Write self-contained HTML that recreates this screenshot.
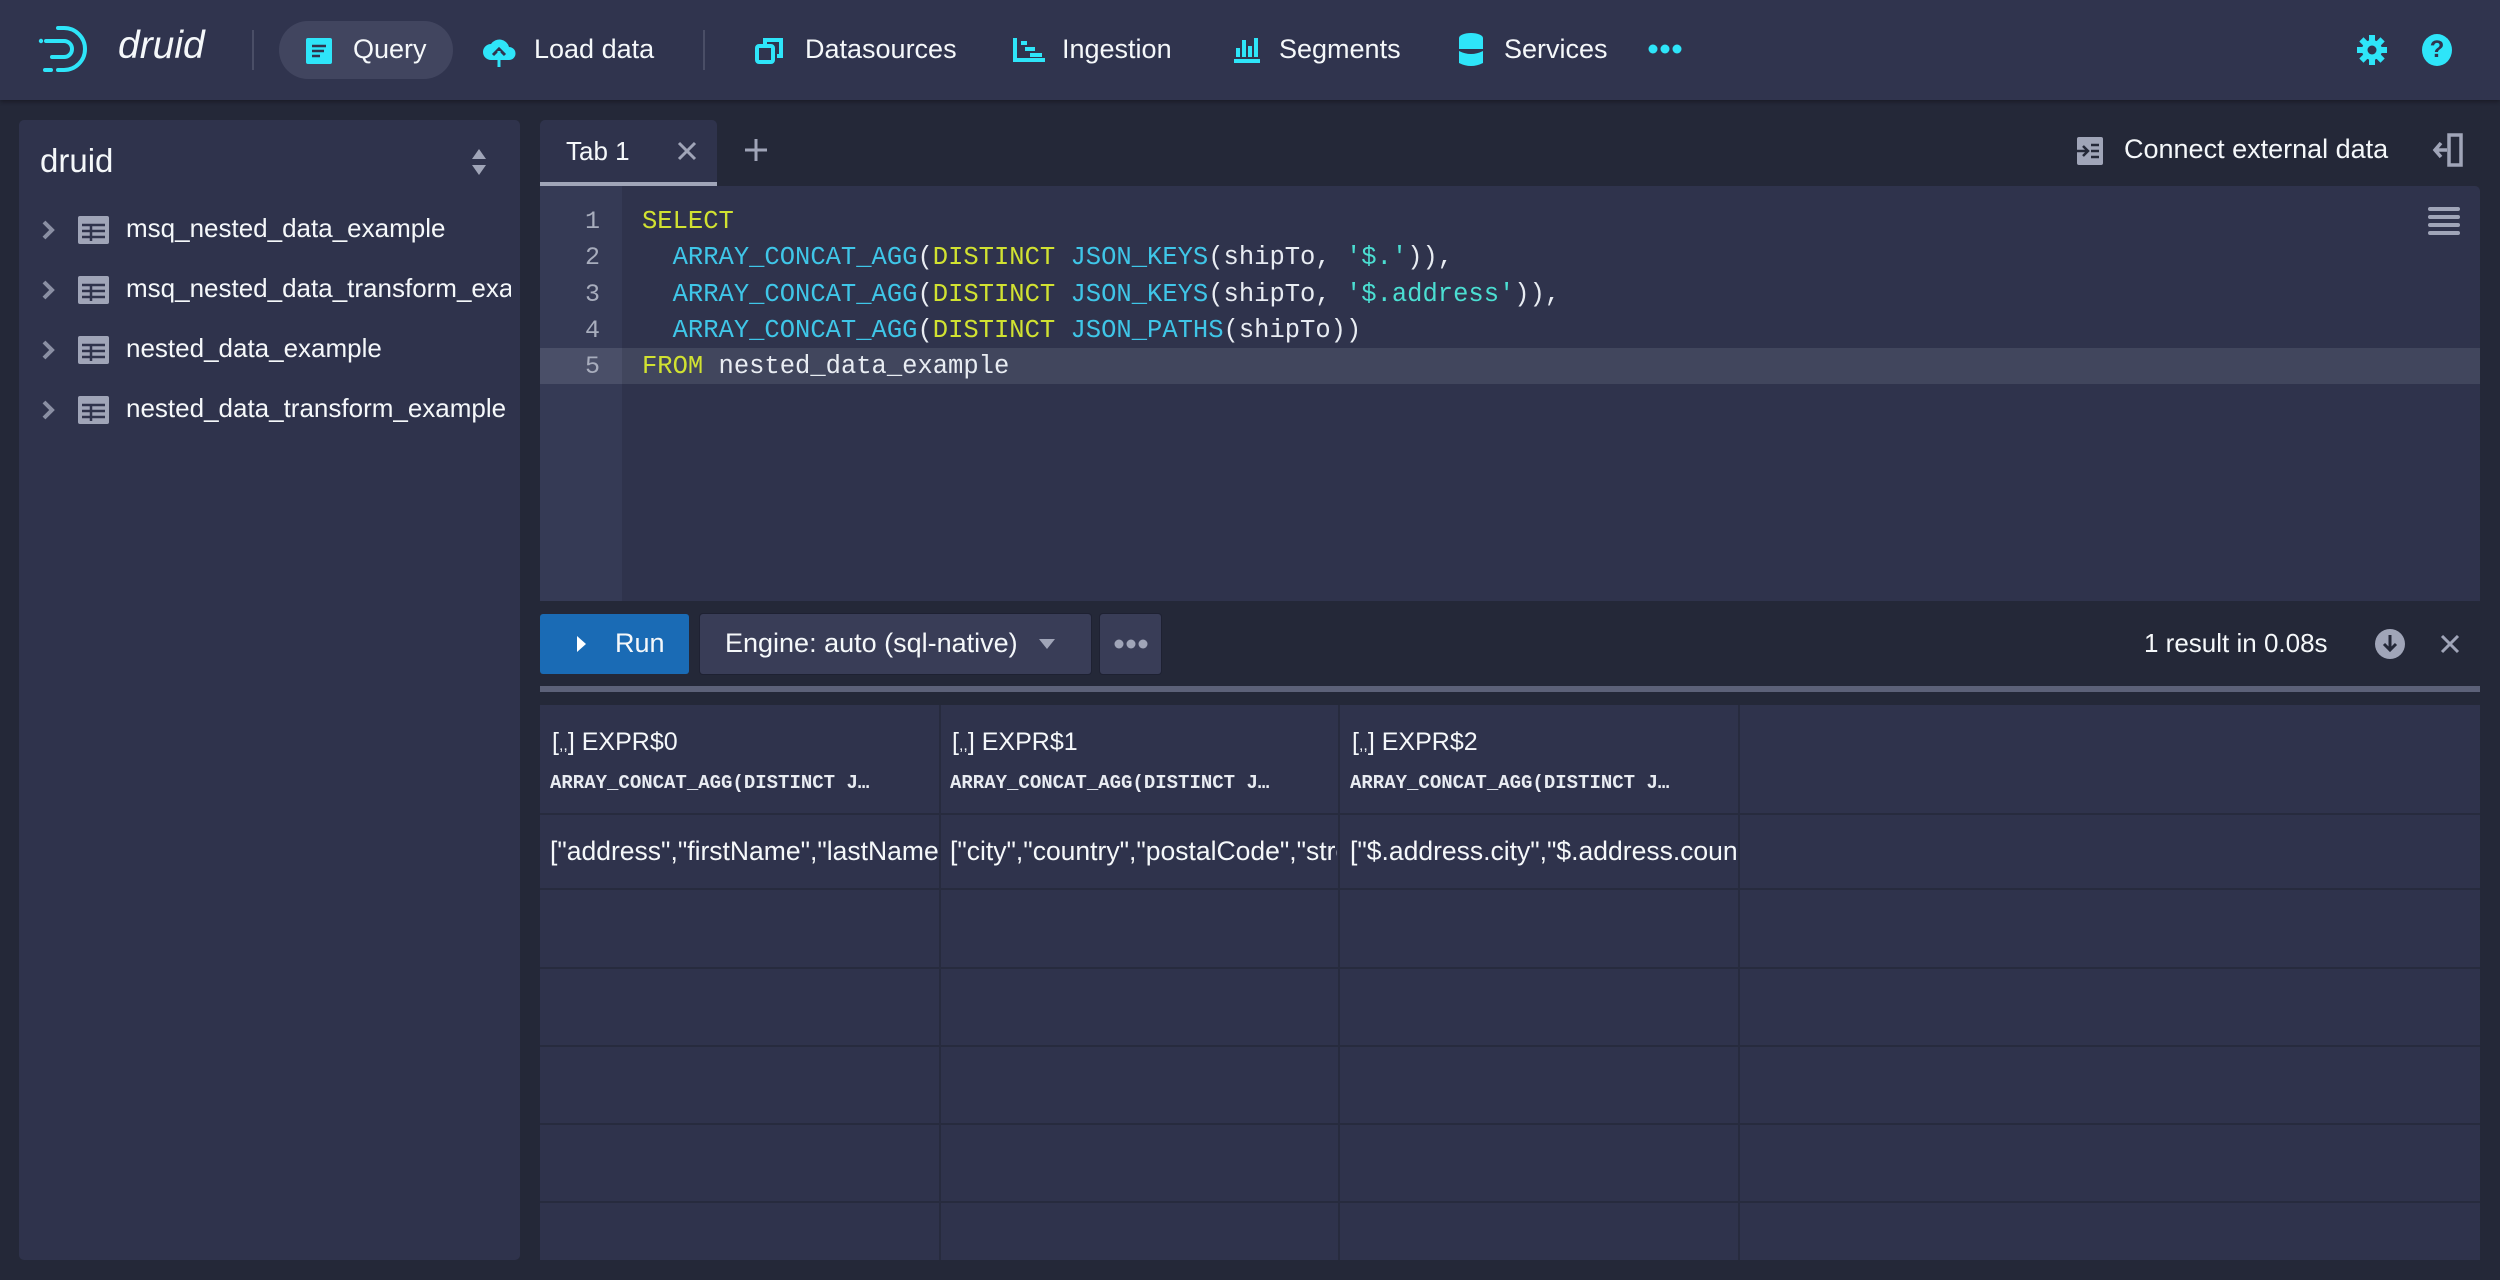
<!DOCTYPE html>
<html><head><meta charset="utf-8"><style>
*{margin:0;padding:0;box-sizing:border-box}
body{width:2500px;height:1280px;background:#242838;font-family:"Liberation Sans",sans-serif;color:#f5f8fa;position:relative;overflow:hidden}
.a{position:absolute}
.hdr{left:0;top:0;width:2500px;height:100px;background:#30344e;box-shadow:0 2px 4px rgba(0,0,0,.3)}
.nav{font-size:27px;top:34px;color:#f5f8fa}
.side{left:19px;top:120px;width:501px;height:1140px;background:#2f334c;border-radius:5px}
.item{font-size:26px;color:#f5f8fa}
.code{font-family:"Liberation Mono",monospace;font-size:25.5px;white-space:pre}
.k{color:#d1e231}.f{color:#3fc6e8}.s{color:#4bdfd2}.p{color:#e8ecf2}
.ln{font-family:"Liberation Mono",monospace;font-size:25px;color:#a8adbd;width:60px;text-align:right;left:540px;line-height:36.3px}
.cell{font-size:26.5px;color:#f5f8fa;white-space:nowrap;overflow:hidden}
.mono{font-family:"Liberation Mono",monospace;font-size:19px;font-weight:bold;color:#e8ecf2}
</style></head><body>
<div class="a hdr"></div>
<!-- logo -->
<svg class="a" style="left:36px;top:24px" width="60" height="50" viewBox="0 0 60 50"><g fill="none" stroke="#2ee5f9" stroke-width="4" stroke-linecap="round"><path d="M22 4h6a21 21 0 0 1 0 42h-6"/><path d="M10 17h18a8 8 0 0 1 0 16h-12" /><path d="M9 46h6"/></g><circle cx="5" cy="17" r="2.2" fill="#2ee5f9"/></svg>
<div class="a" style="left:118px;top:24px;font-size:39px;color:#f5f8fa;font-style:italic;font-weight:300">druid</div>
<div class="a" style="left:252px;top:30px;width:2px;height:40px;background:#4a4e66"></div>
<div class="a" style="left:279px;top:21px;width:174px;height:58px;border-radius:29px;background:#41455f"></div>
<svg class="a" style="left:304px;top:36px" width="30" height="30"><rect x="2" y="2" width="26" height="26" rx="2" fill="#2ee5f9"/><path d="M8 10h14M8 15h12M8 20h8" stroke="#30344e" stroke-width="2.5"/></svg>
<div class="a nav" style="left:353px">Query</div>
<svg class="a" style="left:482px;top:34px" width="34" height="34" viewBox="0 0 34 34"><path d="M9 26a8 8 0 0 1 0-16 10 10 0 0 1 18 3 6 6 0 0 1 0 13z" fill="#2ee5f9"/><path d="M17 32V15M11 21l6-6 6 6" stroke="#30344e" stroke-width="3" fill="none"/><path d="M17 33V17" stroke="#2ee5f9" stroke-width="3"/></svg>
<div class="a nav" style="left:534px">Load data</div>
<div class="a" style="left:703px;top:30px;width:2px;height:40px;background:#4a4e66"></div>
<svg class="a" style="left:755px;top:36px" width="32" height="28"><rect x="2" y="10" width="16" height="16" rx="2" fill="none" stroke="#2ee5f9" stroke-width="4"/><path d="M10 8V4h16v16h-4" fill="none" stroke="#2ee5f9" stroke-width="4"/></svg>
<div class="a nav" style="left:805px">Datasources</div>
<svg class="a" style="left:1012px;top:36px" width="36" height="28"><path d="M3 2v22h30" fill="none" stroke="#2ee5f9" stroke-width="4"/><rect x="9" y="5" width="6" height="4" fill="#2ee5f9"/><rect x="13" y="11" width="10" height="4" fill="#2ee5f9"/><rect x="18" y="17" width="12" height="4" fill="#2ee5f9"/></svg>
<div class="a nav" style="left:1062px">Ingestion</div>
<svg class="a" style="left:1232px;top:34px" width="30" height="30"><path d="M2 27h26" stroke="#2ee5f9" stroke-width="4"/><rect x="4" y="14" width="4" height="9" fill="#2ee5f9"/><rect x="10" y="6" width="4" height="17" fill="#2ee5f9"/><rect x="16" y="12" width="4" height="11" fill="#2ee5f9"/><rect x="22" y="4" width="4" height="19" fill="#2ee5f9"/></svg>
<div class="a nav" style="left:1279px">Segments</div>
<svg class="a" style="left:1458px;top:33px" width="26" height="34"><ellipse cx="13" cy="5" rx="12" ry="5" fill="#2ee5f9"/><rect x="1" y="5" width="24" height="11" fill="#2ee5f9"/><path d="M1 18q12 6 24 0v12q-12 6-24 0z" fill="#2ee5f9"/></svg>
<div class="a nav" style="left:1504px">Services</div>
<svg class="a" style="left:1648px;top:43px" width="34" height="12"><g fill="#2ee5f9"><circle cx="5" cy="6" r="4.5"/><circle cx="17" cy="6" r="4.5"/><circle cx="29" cy="6" r="4.5"/></g></svg>
<svg class="a" style="left:2357px;top:33px" width="30" height="34" viewBox="-15 -15 30 30"><g fill="#2ee5f9"><circle r="10"/><g id="t"><rect x="-3" y="-15" width="6" height="7"/></g><use href="#t" transform="rotate(45)"/><use href="#t" transform="rotate(90)"/><use href="#t" transform="rotate(135)"/><use href="#t" transform="rotate(180)"/><use href="#t" transform="rotate(225)"/><use href="#t" transform="rotate(270)"/><use href="#t" transform="rotate(315)"/></g><circle r="4.5" fill="#30344e"/></svg>
<div class="a" style="left:2422px;top:34px;width:30px;height:32px;border-radius:50%;background:#2ee5f9;color:#30344e;font-weight:bold;font-size:24px;text-align:center;line-height:32px">?</div>

<!-- sidebar -->
<div class="a side"></div>
<div class="a" style="left:40px;top:142px;font-size:33px">druid</div>
<svg class="a" style="left:470px;top:148px" width="18" height="28"><path d="M9 1l7 10H2z M9 27l7-10H2z" fill="#a0a5b8"/></svg>
<svg class="a" style="left:40px;top:214px" width="20" height="220"><g fill="none" stroke="#8a8fa3" stroke-width="4"><path d="M4 8l8 8-8 8"/><path d="M4 68l8 8-8 8"/><path d="M4 128l8 8-8 8"/><path d="M4 188l8 8-8 8"/></g></svg>
<svg class="a" style="left:78px;top:215px" width="32" height="220"><g fill="#a0a5b8"><rect y="1" width="31" height="28" rx="2"/><rect y="61" width="31" height="28" rx="2"/><rect y="121" width="31" height="28" rx="2"/><rect y="181" width="31" height="28" rx="2"/></g><g stroke="#2f334c" stroke-width="2.5"><path d="M4 10h23M4 16h23M4 22h23M13 9v17"/><path d="M4 70h23M4 76h23M4 82h23M13 69v17"/><path d="M4 130h23M4 136h23M4 142h23M13 129v17"/><path d="M4 190h23M4 196h23M4 202h23M13 189v17"/></g></svg>
<div class="a item" style="left:126px;top:213px">msq_nested_data_example</div>
<div class="a item" style="left:126px;top:273px;width:385px;overflow:hidden;white-space:nowrap">msq_nested_data_transform_example</div>
<div class="a item" style="left:126px;top:333px">nested_data_example</div>
<div class="a item" style="left:126px;top:393px;width:385px;overflow:hidden;white-space:nowrap">nested_data_transform_example</div>

<!-- tabs -->
<div class="a" style="left:540px;top:120px;width:177px;height:66px;background:#2f334c;border-radius:5px 5px 0 0;border-bottom:4px solid #a0a5b8"></div>
<div class="a" style="left:566px;top:136px;font-size:26px">Tab 1</div>
<svg class="a" style="left:676px;top:140px" width="22" height="22"><path d="M3 3l16 16M19 3L3 19" stroke="#a0a5b8" stroke-width="3"/></svg>
<svg class="a" style="left:744px;top:138px" width="24" height="24"><path d="M12 1v22M1 12h22" stroke="#a0a5b8" stroke-width="3"/></svg>
<svg class="a" style="left:2075px;top:136px" width="30" height="30"><rect x="2" y="1" width="26" height="28" rx="2" fill="#a0a5b8"/><path d="M0 15h12M8 10l5 5-5 5M16 9h8M16 15h8M16 21h8" stroke="#242838" stroke-width="2.5" fill="none"/></svg>
<div class="a" style="left:2124px;top:134px;font-size:27px">Connect external data</div>
<svg class="a" style="left:2432px;top:132px" width="34" height="36"><rect x="17" y="3" width="12" height="30" fill="none" stroke="#a0a5b8" stroke-width="3.5"/><path d="M15 18H3M9 11l-6 7 6 7" fill="none" stroke="#a0a5b8" stroke-width="3.5"/></svg>

<!-- editor -->
<div class="a" style="left:540px;top:186px;width:1940px;height:415px;background:#2f334c;border-radius:0 5px 0 0"></div>
<div class="a" style="left:540px;top:186px;width:82px;height:415px;background:#353a55"></div>
<div class="a" style="left:540px;top:348px;width:1940px;height:36px;background:#41465d"></div>
<div class="a" style="left:540px;top:348px;width:82px;height:36px;background:#4a4f68"></div>
<svg class="a" style="left:2428px;top:206px" width="32" height="30"><path d="M2 3h28M2 11h28M2 19h28M2 27h28" stroke="#a0a5b8" stroke-width="4" stroke-linecap="round"/></svg>
<div class="a ln" style="top:204px">1<br>2<br>3<br>4<br>5</div>
<div class="a code" style="left:642px;top:204px;line-height:36.3px"><span class="k">SELECT</span>
<span class="f">  ARRAY_CONCAT_AGG</span><span class="p">(</span><span class="k">DISTINCT</span> <span class="f">JSON_KEYS</span><span class="p">(shipTo, </span><span class="s">'$.'</span><span class="p">)),</span>
<span class="f">  ARRAY_CONCAT_AGG</span><span class="p">(</span><span class="k">DISTINCT</span> <span class="f">JSON_KEYS</span><span class="p">(shipTo, </span><span class="s">'$.address'</span><span class="p">)),</span>
<span class="f">  ARRAY_CONCAT_AGG</span><span class="p">(</span><span class="k">DISTINCT</span> <span class="f">JSON_PATHS</span><span class="p">(shipTo))</span>
<span class="k">FROM</span><span class="p"> nested_data_example</span></div>

<!-- run bar -->
<div class="a" style="left:540px;top:614px;width:149px;height:60px;background:#1a6bb5;border-radius:3px"></div>
<svg class="a" style="left:576px;top:635px" width="12" height="18"><path d="M1 1l9 8-9 8z" fill="#fff"/></svg>
<div class="a" style="left:615px;top:628px;font-size:27px">Run</div>
<div class="a" style="left:700px;top:614px;width:391px;height:60px;background:#393d57;border-radius:3px;box-shadow:0 0 0 1px #1e2132"></div>
<div class="a" style="left:725px;top:628px;font-size:27px">Engine: auto (sql-native)</div>
<svg class="a" style="left:1038px;top:638px" width="18" height="12"><path d="M1 1h16l-8 10z" fill="#a0a5b8"/></svg>
<div class="a" style="left:1100px;top:614px;width:61px;height:60px;background:#393d57;border-radius:3px;box-shadow:0 0 0 1px #1e2132"></div>
<svg class="a" style="left:1114px;top:638px" width="34" height="12"><g fill="#a0a5b8"><circle cx="5" cy="6" r="4.5"/><circle cx="17" cy="6" r="4.5"/><circle cx="29" cy="6" r="4.5"/></g></svg>
<div class="a" style="left:2144px;top:628px;font-size:26px">1 result in 0.08s</div>
<svg class="a" style="left:2374px;top:628px" width="32" height="32"><circle cx="16" cy="16" r="15" fill="#a0a5b8"/><path d="M16 7v15M10 16l6 6 6-6" stroke="#242838" stroke-width="3" fill="none"/></svg>
<svg class="a" style="left:2440px;top:634px" width="20" height="20"><path d="M2 2l16 16M18 2L2 18" stroke="#a0a5b8" stroke-width="3"/></svg>
<div class="a" style="left:540px;top:686px;width:1940px;height:6px;background:#5c6178"></div>

<!-- table -->
<div class="a" style="left:540px;top:705px;width:1940px;height:555px;background:#2f334c"></div>
<div class="a" style="left:540px;top:813px;width:1940px;height:2px;background:#272b3e"></div>
<div class="a" style="left:540px;top:888px;width:1940px;height:2px;background:#272b3e"></div>
<div class="a" style="left:540px;top:967px;width:1940px;height:2px;background:#272b3e"></div>
<div class="a" style="left:540px;top:1045px;width:1940px;height:2px;background:#272b3e"></div>
<div class="a" style="left:540px;top:1123px;width:1940px;height:2px;background:#272b3e"></div>
<div class="a" style="left:540px;top:1201px;width:1940px;height:2px;background:#272b3e"></div>
<div class="a" style="left:939px;top:705px;width:2px;height:555px;background:#272b3e"></div>
<div class="a" style="left:1338px;top:705px;width:2px;height:555px;background:#272b3e"></div>
<div class="a" style="left:1738px;top:705px;width:2px;height:555px;background:#272b3e"></div>

<div class="a cell" style="left:552px;top:728px;font-size:25px">[<span style="font-size:16px">,,</span>] EXPR$0</div>
<div class="a cell" style="left:952px;top:728px;font-size:25px">[<span style="font-size:16px">,,</span>] EXPR$1</div>
<div class="a cell" style="left:1352px;top:728px;font-size:25px">[<span style="font-size:16px">,,</span>] EXPR$2</div>
<div class="a mono" style="left:550px;top:772px">ARRAY_CONCAT_AGG(DISTINCT J…</div>
<div class="a mono" style="left:950px;top:772px">ARRAY_CONCAT_AGG(DISTINCT J…</div>
<div class="a mono" style="left:1350px;top:772px">ARRAY_CONCAT_AGG(DISTINCT J…</div>
<div class="a cell" style="left:550px;top:836px;width:388px">["address","firstName","lastName"]</div>
<div class="a cell" style="left:950px;top:836px;width:387px">["city","country","postalCode","street"]</div>
<div class="a cell" style="left:1350px;top:836px;width:387px">["$.address.city","$.address.country"]</div>
</body></html>
